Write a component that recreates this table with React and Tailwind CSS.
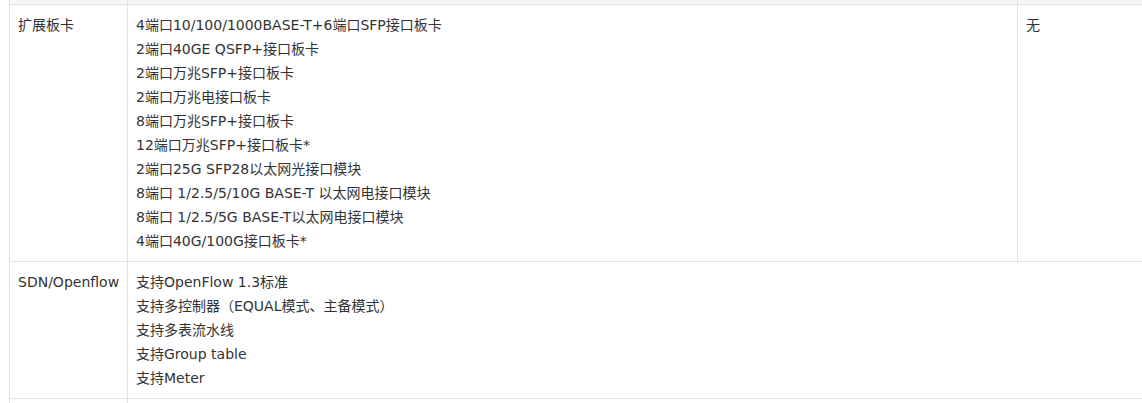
const expansion = [
  '4端口10/100/1000BASE-T+6端口SFP接口板卡',
  '2端口40GE QSFP+接口板卡',
  '2端口万兆SFP+接口板卡',
  '2端口万兆电接口板卡',
  '8端口万兆SFP+接口板卡',
  '12端口万兆SFP+接口板卡*',
  '2端口25G SFP28以太网光接口模块',
  '8端口 1/2.5/5/10G BASE-T 以太网电接口模块',
  '8端口 1/2.5/5G BASE-T以太网电接口模块',
  '4端口40G/100G接口板卡*',
];

const sdn = [
  '支持OpenFlow 1.3标准',
  '支持多控制器（EQUAL模式、主备模式）',
  '支持多表流水线',
  '支持Group table',
  '支持Meter',
];

const cell = 'border border-[#e3e3e3] px-2 py-2 align-top';

export default function App() {
  return (
    <div
      className="w-[1142px] h-[403px] overflow-hidden bg-white pl-[9px] text-[14px] leading-6 text-[#333]"
      style={{ fontFamily: '"DejaVu Sans", "Noto Sans CJK SC", sans-serif' }}
    >
      <table className="w-[1220px] border-collapse table-fixed -mt-[1px]">
        <colgroup>
          <col className="w-[118px]" />
          <col className="w-[890px]" />
          <col className="w-[212px]" />
        </colgroup>
        <tbody>
          <tr className="h-[5px] bg-[#f7f7f7]">
            <td className="border border-[#e3e3e3] p-0" />
            <td className="border border-[#e3e3e3] p-0" />
            <td className="border border-[#e3e3e3] p-0" />
          </tr>
          <tr>
            <td className={cell}>扩展板卡</td>
            <td className={cell}>
              {expansion.map((t) => (
                <div key={t}>{t}</div>
              ))}
            </td>
            <td className={cell}>无</td>
          </tr>
          <tr>
            <td className={cell}>SDN/Openflow</td>
            <td className={cell} colSpan={2}>
              {sdn.map((t) => (
                <div key={t}>{t}</div>
              ))}
            </td>
          </tr>
          <tr>
            <td className={cell}>&nbsp;</td>
            <td className={cell} colSpan={2}>&nbsp;</td>
          </tr>
        </tbody>
      </table>
    </div>
  );
}
